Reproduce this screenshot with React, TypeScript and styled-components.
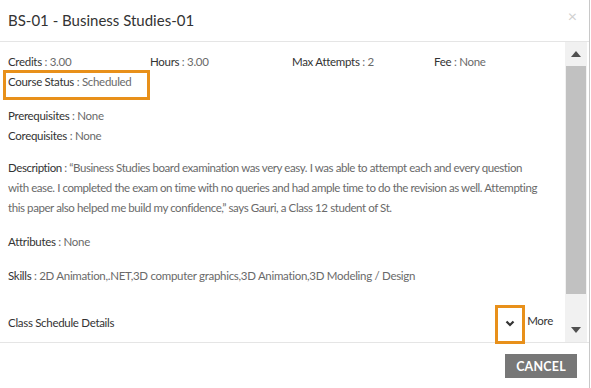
import React from "react";
import styled, { createGlobalStyle } from "styled-components";

const Global = createGlobalStyle`
  html, body { margin: 0; padding: 0; background: #fff; }
  body { font-family: Lato, "Noto Sans", "Liberation Sans", sans-serif; color: #333; }
  * { box-sizing: border-box; }
`;

const Modal = styled.div`
  width: 590px;
  height: 388px;
  border-right: 1px solid #c8c8c8;
  display: flex;
  flex-direction: column;
  background: #fff;
`;

const Header = styled.div`
  height: 42px;
  flex: none;
  border-bottom: 1px solid #e5e5e5;
  display: flex;
  align-items: center;
  justify-content: space-between;
  padding: 0 12px 2px 8px;
`;

const Title = styled.h4`
  margin: 0;
  font-size: 15px;
  font-weight: 400;
  color: #333;
`;

const Close = styled.span`
  font-size: 16px;
  color: #d0d0d0;
  line-height: 1;
  margin-top: -8px;
`;

const BodyWrap = styled.div`
  height: 300px;
  flex: none;
  display: flex;
`;

const Content = styled.div`
  flex: 1;
  min-width: 0;
  padding: 10px 4px 0 8px;
  font-size: 11.5px;
  letter-spacing: -0.3px;
  line-height: 20px;
`;

const Section = styled.div<{ $mt?: number }>`
  margin-top: ${(p) => p.$mt ?? 0}px;
`;

const InfoGrid = styled.div`
  display: grid;
  grid-template-columns: repeat(4, 142px);
  grid-auto-rows: 20px;
`;

const Label = styled.span`
  color: #333;
  font-weight: 400;
`;

const Value = styled.span`
  color: #6a6a6a;
  font-weight: 400;
`;

const Highlight = styled.div`
  border: 3px solid #e8901a;
  margin: -2px 0 0 -5px;
  width: 147px;
  height: 30px;
  padding: 0 2px;
  line-height: 18px;
  grid-column: 1 / 2;
`;

const Paragraph = styled.p`
  margin: 0;
  white-space: nowrap;
  letter-spacing: -0.42px;
`;

const ScheduleRow = styled.div`
  display: flex;
  justify-content: space-between;
  align-items: flex-start;
  margin-top: 27px;
  padding-right: 8px;
`;

const ScheduleTitle = styled.span`
  color: #333;
`;

const MoreGroup = styled.div`
  display: flex;
  align-items: flex-start;
`;

const ChevronBox = styled.span`
  position: relative;
  width: 30px;
  height: 39px;
  margin-top: -8px;
  border: 3px solid #e8901a;
  display: flex;
  justify-content: center;
  padding-top: 12px;
`;

const More = styled.span`
  color: #333;
  margin-left: 2px;
  margin-top: -2px;
`;

const Scrollbar = styled.div`
  width: 22px;
  flex: none;
  margin-right: 2px;
  background: #f1f1f1;
  display: flex;
  flex-direction: column;
`;

const ScrollBtn = styled.div`
  height: 24px;
  flex: none;
  display: flex;
  align-items: center;
  justify-content: center;
`;

const Track = styled.div`
  flex: 1;
  display: flex;
  flex-direction: column;
  padding: 0 1px;
`;

const Thumb = styled.div`
  height: 228px;
  background: #c1c1c1;
`;

const Footer = styled.div`
  flex: 1;
  border-top: 1px solid #e5e5e5;
  display: flex;
  justify-content: flex-end;
  align-items: flex-start;
  padding: 11px 12px 0 0;
`;

const CancelButton = styled.button`
  width: 72px;
  height: 24px;
  border: none;
  background: #777;
  color: #fff;
  font-family: Lato, "Noto Sans", sans-serif;
  font-weight: 700;
  font-size: 12.5px;
  letter-spacing: 0.2px;
  padding: 0;
`;

const Arrow = ({ up }: { up?: boolean }) => (
  <svg width="10" height="6" viewBox="0 0 10 6">
    <polygon points={up ? "0,6 10,6 5,0" : "0,0 10,0 5,6"} fill="#505050" />
  </svg>
);

const Chevron = () => (
  <svg width="10" height="7" viewBox="0 0 10 7">
    <polyline points="1.5,1.5 5,5 8.5,1.5" fill="none" stroke="#333" strokeWidth="2.2" />
  </svg>
);

export default function App() {
  return (
    <>
      <Global />
      <Modal>
        <Header>
          <Title>BS-01 - Business Studies-01</Title>
          <Close>×</Close>
        </Header>
        <BodyWrap>
          <Content>
            <InfoGrid>
              <div><Label>Credits</Label> <Value>: 3.00</Value></div>
              <div><Label>Hours</Label> <Value>: 3.00</Value></div>
              <div><Label>Max Attempts</Label> <Value>: 2</Value></div>
              <div><Label>Fee</Label> <Value>: None</Value></div>
              <Highlight><Label>Course Status</Label> <Value>: Scheduled</Value></Highlight>
            </InfoGrid>
            <Section $mt={14}>
              <div><Label>Prerequisites</Label> <Value>: None</Value></div>
              <div><Label>Corequisites</Label> <Value>: None</Value></div>
            </Section>
            <Section $mt={12}>
              <Paragraph>
                <Label>Description</Label>{" "}
                <Value>
                  : “Business Studies board examination was very easy. I was able to attempt each and every question
                  <br />
                  with ease. I completed the exam on time with no queries and had ample time to do the revision as well. Attempting
                  <br />
                  this paper also helped me build my confidence,” says Gauri, a Class 12 student of St.
                </Value>
              </Paragraph>
            </Section>
            <Section $mt={14}>
              <Label>Attributes</Label> <Value>: None</Value>
            </Section>
            <Section $mt={14}>
              <Label>Skills</Label>{" "}
              <Value>: 2D Animation,.NET,3D computer graphics,3D Animation,3D Modeling / Design</Value>
            </Section>
            <ScheduleRow>
              <ScheduleTitle>Class Schedule Details</ScheduleTitle>
              <MoreGroup>
                <ChevronBox><Chevron /></ChevronBox>
                <More>More</More>
              </MoreGroup>
            </ScheduleRow>
          </Content>
          <Scrollbar>
            <ScrollBtn><Arrow up /></ScrollBtn>
            <Track><Thumb /></Track>
            <ScrollBtn><Arrow /></ScrollBtn>
          </Scrollbar>
        </BodyWrap>
        <Footer>
          <CancelButton>CANCEL</CancelButton>
        </Footer>
      </Modal>
    </>
  );
}
